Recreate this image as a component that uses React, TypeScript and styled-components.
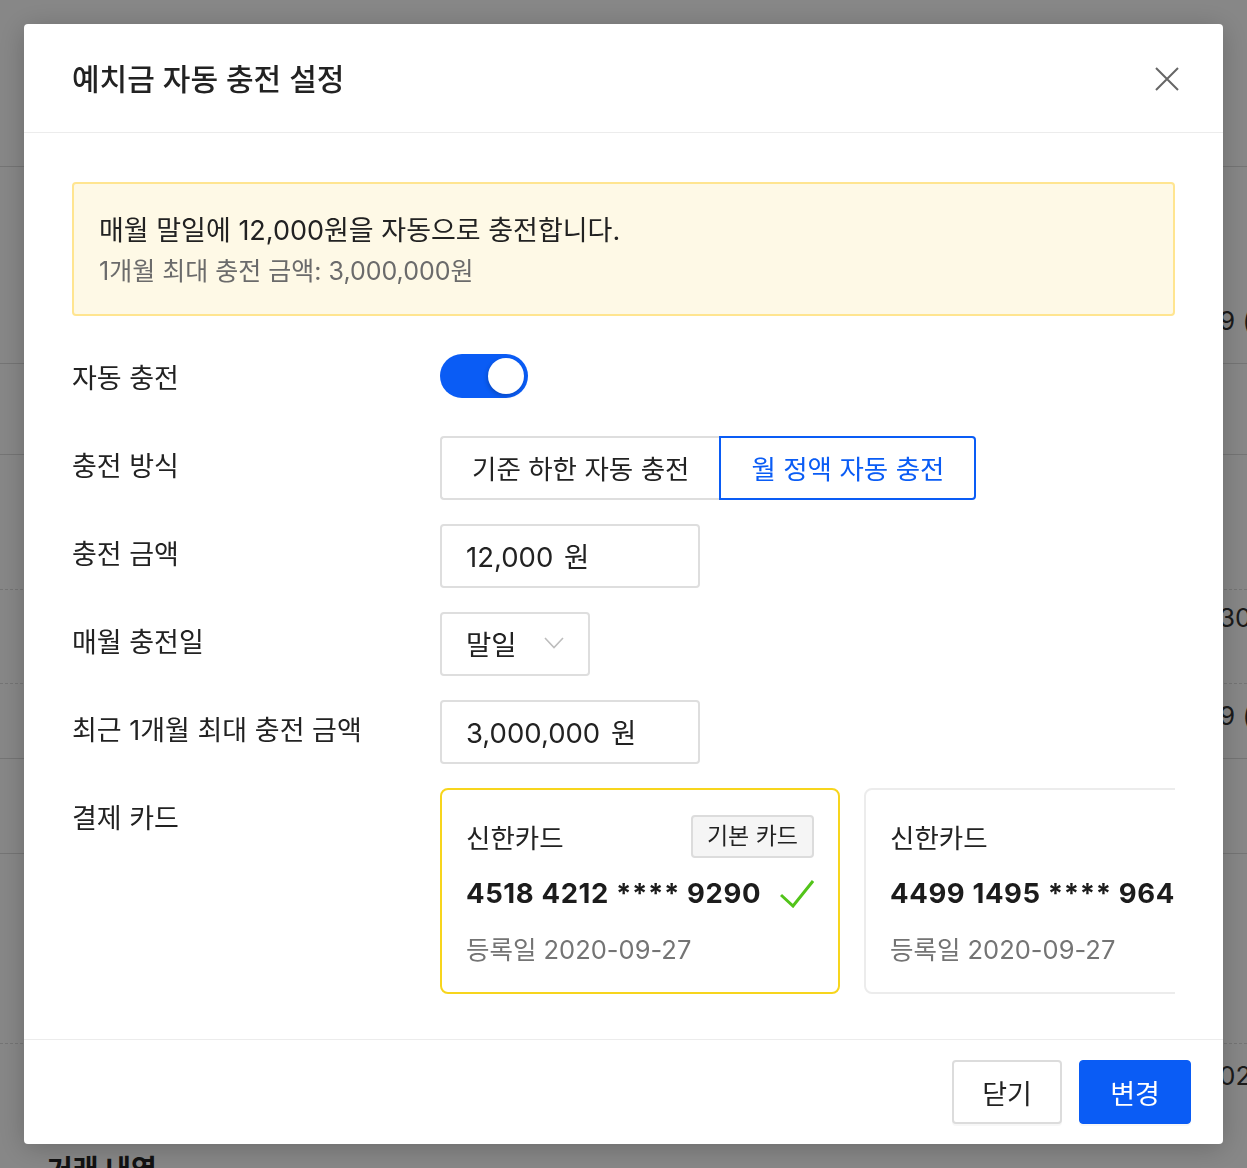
import React from 'react';
import styled, { createGlobalStyle } from 'styled-components';

const GlobalStyle = createGlobalStyle`
  * { box-sizing: border-box; }
  html, body { margin: 0; padding: 0; }
  body {
    font-family: "Inter", "Noto Sans CJK KR", "Noto Sans", sans-serif;
    color: #222;
    background: #fff;
  }
`;

const BLUE = '#0a5cf5';

/* ---------- background page ---------- */
const Page = styled.div`
  position: relative;
  width: 1247px;
  height: 1168px;
  overflow: hidden;
  background: #fff;
`;

const BgTable = styled.div`
  display: flex;
  flex-direction: column;
  padding-top: 166px;
`;

const BgRow = styled.div<{ $h: number; $dashed?: boolean; $pt: number }>`
  height: ${(p) => p.$h}px;
  border-top: 1px ${(p) => (p.$dashed ? 'dashed' : 'solid')} #dcdcdc;
  padding: ${(p) => p.$pt}px 0 0 1219px;
  font-size: 26px;
  line-height: 36px;
  color: #333;
  white-space: nowrap;
`;

const BgHeading = styled.h2`
  margin: 30px 0 0 47px;
  font-size: 28px;
  line-height: 40px;
  font-weight: 700;
  color: #222;
`;

/* ---------- modal ---------- */
const Overlay = styled.div`
  position: fixed;
  inset: 0;
  background: rgba(0, 0, 0, 0.47);
  padding: 24px;
  display: flex;
  align-items: flex-start;
  justify-content: flex-start;
`;

const Modal = styled.div`
  width: 1200px;
  height: 1120px;
  background: #fff;
  border-radius: 4px;
  box-shadow: 0 4px 28px rgba(0, 0, 0, 0.22);
  display: flex;
  flex-direction: column;
  overflow: hidden;
`;

const Header = styled.div`
  height: 109px;
  flex-shrink: 0;
  border-bottom: 1px solid #ececec;
  padding: 2px 43px 0 48px;
  display: flex;
  align-items: center;
  justify-content: space-between;
`;

const Title = styled.h1`
  margin: 0;
  font-size: 30px;
  line-height: 40px;
  font-weight: 500;
  color: #222;
`;

const CloseButton = styled.button`
  width: 26px;
  height: 26px;
  padding: 0;
  border: 0;
  background: transparent;
  display: flex;
  align-items: center;
  justify-content: center;
  cursor: pointer;
`;

const Body = styled.div`
  flex: 1;
  padding: 49px 48px 0;
  display: flex;
  flex-direction: column;
`;

const Notice = styled.div`
  height: 134px;
  border: 2px solid #ffe590;
  background: #fef9e6;
  border-radius: 4px;
  padding: 27px 25px 21px;
`;

const NoticeMain = styled.div`
  font-size: 27px;
  line-height: 40px;
  color: #222;
`;

const NoticeSub = styled.div`
  font-size: 25px;
  line-height: 40px;
  color: #6b6b6b;
`;

const Form = styled.div`
  margin-top: 32px;
  display: grid;
  grid-template-columns: 368px 1fr;
  row-gap: 24px;
  align-items: start;
`;

const Label = styled.div`
  font-size: 27px;
  line-height: 62px;
  color: #222;
  white-space: nowrap;
`;

const ToggleCell = styled.div`
  height: 64px;
  padding-top: 6px;
`;

const Toggle = styled.button<{ $on: boolean }>`
  width: 88px;
  height: 44px;
  border-radius: 22px;
  border: 0;
  padding: 4px;
  background: ${(p) => (p.$on ? BLUE : '#d9d9d9')};
  display: flex;
  justify-content: ${(p) => (p.$on ? 'flex-end' : 'flex-start')};
  cursor: pointer;
`;

const Knob = styled.span`
  width: 36px;
  height: 36px;
  border-radius: 50%;
  background: #fff;
  box-shadow: -1px 2px 4px rgba(0, 0, 0, 0.2);
`;

const Segmented = styled.div`
  display: flex;
  height: 64px;
`;

const Segment = styled.button<{ $active: boolean; $first?: boolean }>`
  height: 64px;
  padding: 0 30px 2px;
  font-family: inherit;
  font-size: 26.5px;
  background: #fff;
  cursor: pointer;
  color: ${(p) => (p.$active ? BLUE : '#222')};
  border: ${(p) => (p.$active ? `2px solid ${BLUE}` : '2px solid #dedede')};
  border-right-width: ${(p) => (p.$first ? '0' : '2px')};
  border-radius: ${(p) => (p.$first ? '4px 0 0 4px' : '0 4px 4px 0')};
`;

const Field = styled.div<{ $w: number }>`
  width: ${(p) => p.$w}px;
  height: 64px;
  border: 2px solid #dedede;
  border-radius: 4px;
  padding: 0 24px 2px;
  display: flex;
  align-items: center;
  justify-content: space-between;
  font-size: 27.5px;
  word-spacing: 3px;
  color: #222;
`;

const Cards = styled.div`
  display: flex;
  gap: 24px;
  overflow: hidden;
`;

const Card = styled.div<{ $selected: boolean }>`
  flex-shrink: 0;
  width: 400px;
  height: 206px;
  border: ${(p) => (p.$selected ? '2px solid #f7d51d' : '2px solid #ececec')};
  border-radius: 8px;
  padding: 25px 24px 24px;
  display: flex;
  flex-direction: column;
`;

const CardHead = styled.div`
  height: 43px;
  display: flex;
  align-items: center;
  justify-content: space-between;
`;

const CardName = styled.div`
  font-size: 26.5px;
  color: #222;
`;

const Badge = styled.span`
  height: 43px;
  padding: 0 14px;
  background: #f5f5f5;
  border: 2px solid #dcdcdc;
  border-radius: 4px;
  font-size: 23px;
  line-height: 39px;
  color: #222;
`;

const CardNumber = styled.div`
  margin-top: 17px;
  height: 36px;
  display: flex;
  align-items: center;
  justify-content: space-between;
  font-size: 27.5px;
  font-weight: 700;
  letter-spacing: 0.6px;
  color: #1c1c1c;
  white-space: nowrap;
`;

const CardDate = styled.div`
  margin-top: 21px;
  font-size: 25.5px;
  line-height: 36px;
  color: #747474;
`;

const Footer = styled.div`
  height: 105px;
  flex-shrink: 0;
  border-top: 1px solid #ececec;
  padding: 20px 32px 0;
  display: flex;
  justify-content: flex-end;
  align-items: flex-start;
  gap: 17px;
`;

const Button = styled.button<{ $primary?: boolean; $w: number }>`
  width: ${(p) => p.$w}px;
  height: 64px;
  border-radius: 4px;
  font-family: inherit;
  font-size: 27px;
  cursor: pointer;
  background: ${(p) => (p.$primary ? BLUE : '#fff')};
  color: ${(p) => (p.$primary ? '#fff' : '#222')};
  border: ${(p) => (p.$primary ? `1px solid ${BLUE}` : '2px solid #dcdcdc')};
  box-shadow: 0 2px 0 rgba(0, 0, 0, 0.03);
`;

const bgRows = [
  { h: 197, pt: 136, text: '9 (화)' },
  { h: 91, pt: 0, text: '' },
  { h: 135, pt: 0, text: '' },
  { h: 94, pt: 10, text: ' 30', dashed: true },
  { h: 75, pt: 14, text: '9 (수)', dashed: true },
  { h: 95, pt: 0, text: '' },
  { h: 190, pt: 0, text: '' },
  { h: 77, pt: 14, text: '02', dashed: true },
];

const cards = [
  { name: '신한카드', number: '4518 4212 **** 9290', date: '등록일 2020-09-27', selected: true, isDefault: true },
  { name: '신한카드', number: '4499 1495 **** 9646', date: '등록일 2020-09-27', selected: false, isDefault: false },
];

export default function App() {
  return (
    <>
      <GlobalStyle />
      <Page>
        <BgTable>
          {bgRows.map((r, i) => (
            <BgRow key={i} $h={r.h} $pt={r.pt} $dashed={r.dashed}>
              {r.text}
            </BgRow>
          ))}
        </BgTable>
        <BgHeading>거래 내역</BgHeading>

        <Overlay>
          <Modal>
            <Header>
              <Title>예치금 자동 충전 설정</Title>
              <CloseButton aria-label="닫기">
                <svg width="24" height="24" viewBox="0 0 24 24">
                  <path d="M1 1 L23 23 M23 1 L1 23" stroke="#666" strokeWidth="2" fill="none" />
                </svg>
              </CloseButton>
            </Header>

            <Body>
              <Notice>
                <NoticeMain>매월 말일에 12,000원을 자동으로 충전합니다.</NoticeMain>
                <NoticeSub>1개월 최대 충전 금액: 3,000,000원</NoticeSub>
              </Notice>

              <Form>
                <Label>자동 충전</Label>
                <ToggleCell>
                  <Toggle $on aria-label="자동 충전">
                    <Knob />
                  </Toggle>
                </ToggleCell>

                <Label>충전 방식</Label>
                <Segmented>
                  <Segment $first $active={false}>기준 하한 자동 충전</Segment>
                  <Segment $active>월 정액 자동 충전</Segment>
                </Segmented>

                <Label>충전 금액</Label>
                <Field $w={260}>12,000 원</Field>

                <Label>매월 충전일</Label>
                <Field $w={150}>
                  말일
                  <svg width="20" height="12" viewBox="0 0 20 12">
                    <polyline points="1,1 10,10.5 19,1" stroke="#bdbdbd" strokeWidth="1.6" fill="none" />
                  </svg>
                </Field>

                <Label>최근 1개월 최대 충전 금액</Label>
                <Field $w={260}>3,000,000 원</Field>

                <Label>결제 카드</Label>
                <Cards>
                  {cards.map((c, i) => (
                    <Card key={i} $selected={c.selected}>
                      <CardHead>
                        <CardName>{c.name}</CardName>
                        {c.isDefault && <Badge>기본 카드</Badge>}
                      </CardHead>
                      <CardNumber>
                        {c.number}
                        {c.selected && (
                          <svg width="34" height="30" viewBox="0 0 34 30">
                            <polyline points="1,17 13,28 33,3" stroke="#52c41a" strokeWidth="3" fill="none" />
                          </svg>
                        )}
                      </CardNumber>
                      <CardDate>{c.date}</CardDate>
                    </Card>
                  ))}
                </Cards>
              </Form>
            </Body>

            <Footer>
              <Button $w={110}>닫기</Button>
              <Button $w={112} $primary>변경</Button>
            </Footer>
          </Modal>
        </Overlay>
      </Page>
    </>
  );
}
